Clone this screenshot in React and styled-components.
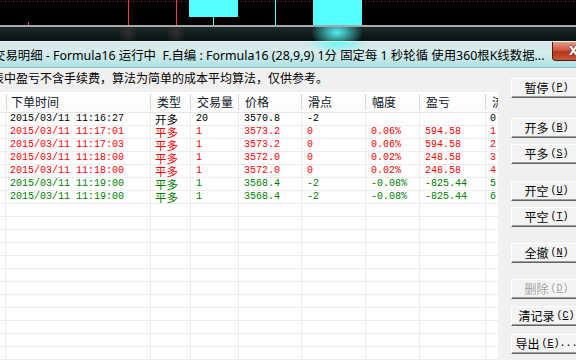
import React from 'react'
import styled, { createGlobalStyle } from 'styled-components';

const GlobalStyle = createGlobalStyle`
  html, body { margin: 0; padding: 0; background: #000; }
  body { font-family: "Noto Sans CJK SC", sans-serif; overflow: hidden; }
`;

const Screen = styled.div`
  width: 576px;
  height: 360px;
  display: flex;
  flex-direction: column;
  overflow: hidden;
`;

const ChartStrip = styled.div`
  height: 25px;
  background: #000;
  svg { display: block; }
`;

const Rule = styled.div`
  height: 2px;
  background: #a6a9a9;
`;

const GlassBand = styled.div`
  height: 14px;
  background:
    radial-gradient(ellipse 26px 16px at 337px 40%, rgba(90, 250, 250, 0.95), rgba(60, 200, 200, 0.4) 70%, transparent 100%),
    radial-gradient(ellipse 10px 10px at 128px 50%, rgba(120, 80, 70, 0.35), transparent),
    radial-gradient(ellipse 10px 10px at 176px 50%, rgba(120, 80, 70, 0.35), transparent),
    linear-gradient(180deg, #1d2b2b 0%, #0e1a1a 60%, #0a1414 100%);
`;

const Window = styled.div`
  flex: 1;
  display: flex;
  flex-direction: column;
  min-height: 0;
`;

const TitleBar = styled.div`
  height: 27px;
  display: flex;
  align-items: flex-start;
  border-top: 1px solid #e6f0f0;
  border-bottom: 1px solid #8fc4c4;
  box-sizing: border-box;
  background:
    radial-gradient(ellipse 30px 12px at 337px 0, rgba(90, 250, 250, 0.9), transparent),
    linear-gradient(180deg, #d0e6e7 0%, #d8eded 40%, #c4e8e8 70%, #ace0e0 100%);
`;

const TitleText = styled.div`
  flex: 1;
  margin-left: -7px;
  padding-top: 6px;
  font-family: "Noto Sans", "Noto Sans CJK SC", sans-serif;
  font-size: 12.4px;
  line-height: 16px;
  color: #000;
  white-space: nowrap;
  overflow: hidden;
`;

const CloseButton = styled.div`
  width: 43px;
  height: 19px;
  margin-right: -19px;
  flex-shrink: 0;
  box-sizing: border-box;
  border: 1px solid #4a1e16;
  border-top: none;
  border-radius: 0 0 4px 4px;
  background: linear-gradient(180deg, #e39a88 0%, #cf5a40 45%, #b83418 55%, #c8583a 100%);
  color: #fff;
  font-family: "DejaVu Sans", sans-serif;
  font-weight: bold;
  font-size: 12px;
  line-height: 18px;
  text-align: center;
  text-shadow: 0 0 2px #400;
`;

const Client = styled.div`
  flex: 1;
  display: flex;
  background: #f0f0f0;
  min-height: 0;
`;

const Main = styled.div`
  width: 498px;
  display: flex;
  flex-direction: column;
`;

const Note = styled.div`
  height: 24px;
  margin-left: -8px;
  font-size: 12px;
  line-height: 20px;
  box-sizing: border-box;
  white-space: nowrap;
  color: #000;
`;

const Table = styled.div`
  flex: 1;
  background: #fff;
  overflow: hidden;
`;

const cols = '5px 146px 40px 48px 63px 64px 54px 66px 60px';

const HeaderRow = styled.div`
  display: grid;
  grid-template-columns: ${cols};
  height: 21px;
  box-sizing: border-box;
  border-bottom: 1px solid #e5e5e5;
  background: linear-gradient(180deg, #fff 0%, #fbfbfc 100%);
`;

const HeadCell = styled.div`
  box-sizing: border-box;
  border-right: 1px solid #d8d8d8;
  padding-left: 6px;
  margin: 2px 0;
  font-size: 12px;
  line-height: 15px;
  color: #101828;
  white-space: nowrap;
  overflow: hidden;
`;

const Row = styled.div`
  display: grid;
  grid-template-columns: ${cols};
  height: 13px;
  box-sizing: border-box;
  border-bottom: 1px solid #ededed;
  color: ${p => p.$color};
`;

const Cell = styled.div`
  box-sizing: border-box;
  border-right: 1px solid #ededed;
  padding-left: ${p => p.$pad || 5}px;
  font-family: ${p => p.$cjk ? '"Noto Sans CJK SC", sans-serif' : '"Liberation Mono", monospace'};
  font-size: ${p => p.$cjk ? 11.5 : 10}px;
  line-height: 12px;
  white-space: nowrap;
  overflow: hidden;
`;

const Side = styled.div`
  flex: 1;
  display: flex;
  flex-direction: column;
  padding-left: 13px;
  padding-top: 10px;
  overflow: hidden;
`;

const Btn = styled.div`
  width: 70px;
  height: 20px;
  flex-shrink: 0;
  margin-top: ${p => p.$top}px;
  box-sizing: border-box;
  border-top: 1px solid #fff;
  border-left: 1px solid #fff;
  border-bottom: 1px solid #646464;
  box-shadow: inset 0 -1px 0 #a0a0a0;
  background: #f3f3f3;
  display: flex;
  align-items: center;
  justify-content: center;
  font-size: 12px;
  line-height: 16px;
  white-space: nowrap;
  color: ${p => p.$disabled ? '#a0a0a0' : '#000'};
  text-shadow: ${p => p.$disabled ? '1px 1px 0 #fff' : 'none'};
`;

const Key = styled.span`
  font-family: "Liberation Mono", monospace;
  font-size: 10px;
  margin-left: 2px;
  u { text-underline-offset: 1px; }
`;

const RED = '#ff0000';
const GREEN = '#008000';

const trades = [
  { time: '2015/03/11 11:16:27', type: '开多', qty: '20', price: '3570.8', slip: '-2', pct: '', pnl: '', no: '0', color: '#000' },
  { time: '2015/03/11 11:17:01', type: '平多', qty: '1', price: '3573.2', slip: '0', pct: '0.06%', pnl: '594.58', no: '1', color: RED },
  { time: '2015/03/11 11:17:03', type: '平多', qty: '1', price: '3573.2', slip: '0', pct: '0.06%', pnl: '594.58', no: '2', color: RED },
  { time: '2015/03/11 11:18:00', type: '平多', qty: '1', price: '3572.0', slip: '0', pct: '0.02%', pnl: '248.58', no: '3', color: RED },
  { time: '2015/03/11 11:18:00', type: '平多', qty: '1', price: '3572.0', slip: '0', pct: '0.02%', pnl: '248.58', no: '4', color: RED },
  { time: '2015/03/11 11:19:00', type: '平多', qty: '1', price: '3568.4', slip: '-2', pct: '-0.08%', pnl: '-825.44', no: '5', color: GREEN },
  { time: '2015/03/11 11:19:00', type: '平多', qty: '1', price: '3568.4', slip: '-2', pct: '-0.08%', pnl: '-825.44', no: '6', color: GREEN },
];

const headers = ['', '下单时间', '类型', '交易量', '价格', '滑点', '幅度', '盈亏', '流水号'];

const buttons = [
  { label: '暂停', key: 'P', top: 0 },
  { label: '开多', key: 'B', top: 20 },
  { label: '平多', key: 'S', top: 6 },
  { label: '开空', key: 'U', top: 17 },
  { label: '平空', key: 'T', top: 6 },
  { label: '全撤', key: 'N', top: 16 },
  { label: '删除', key: 'D', top: 16, disabled: true },
  { label: '清记录', key: 'C', top: 7 },
  { label: '导出', key: 'E', top: 8, more: true },
];

const Chart = () => (
  <svg width="576" height="25" viewBox="0 0 576 25">
    <line x1="1" y1="1.5" x2="576" y2="1.5" stroke="#d0303c" strokeDasharray="1 3" />
    <line x1="28.5" y1="22" x2="28.5" y2="25" stroke="#ff3845" />
    <line x1="128.5" y1="0" x2="128.5" y2="25" stroke="#ff3845" />
    <line x1="176.5" y1="0" x2="176.5" y2="25" stroke="#ff3845" />
    <rect x="189" y="0" width="49" height="17" fill="#55ffff" />
    <line x1="213.5" y1="17" x2="213.5" y2="25" stroke="#55ffff" />
    <line x1="275.5" y1="0" x2="275.5" y2="25" stroke="#55ffff" />
    <rect x="313" y="0" width="49" height="25" fill="#55ffff" />
  </svg>
);

const emptyRows = Array.from({ length: 13 });

const App = () => {
  return (
    <Screen>
      <GlobalStyle />
      <ChartStrip><Chart /></ChartStrip>
      <Rule />
      <GlassBand />
      <Window>
        <TitleBar>
          <TitleText>交易明细 - Formula16 运行中&nbsp;&nbsp;F.自编 : Formula16 (28,9,9) 1分 固定每 1 秒轮循 使用360根K线数据...</TitleText>
          <CloseButton>X</CloseButton>
        </TitleBar>
        <Client>
          <Main>
            <Note>表中盈亏不含手续费，算法为简单的成本平均算法，仅供参考。</Note>
            <Table>
              <HeaderRow>
                {headers.map((h, i) => <HeadCell key={i}>{h}</HeadCell>)}
              </HeaderRow>
              {trades.map((t, i) => (
                <Row key={i} $color={t.color}>
                  <Cell />
                  <Cell>{t.time}</Cell>
                  <Cell $cjk $pad={4}>{t.type}</Cell>
                  <Cell>{t.qty}</Cell>
                  <Cell>{t.price}</Cell>
                  <Cell>{t.slip}</Cell>
                  <Cell>{t.pct}</Cell>
                  <Cell>{t.pnl}</Cell>
                  <Cell $pad={4}>{t.no}</Cell>
                </Row>
              ))}
              {emptyRows.map((_, i) => (
                <Row key={'e' + i}>
                  {headers.map((h, j) => <Cell key={j} />)}
                </Row>
              ))}
            </Table>
          </Main>
          <Side>
            {buttons.map(b => (
              <Btn key={b.key} $top={b.top} $disabled={b.disabled}>
                {b.label}
                <Key>(<u>{b.key}</u>){b.more ? '...' : ''}</Key>
              </Btn>
            ))}
          </Side>
        </Client>
      </Window>
    </Screen>
  )
}

export default App
